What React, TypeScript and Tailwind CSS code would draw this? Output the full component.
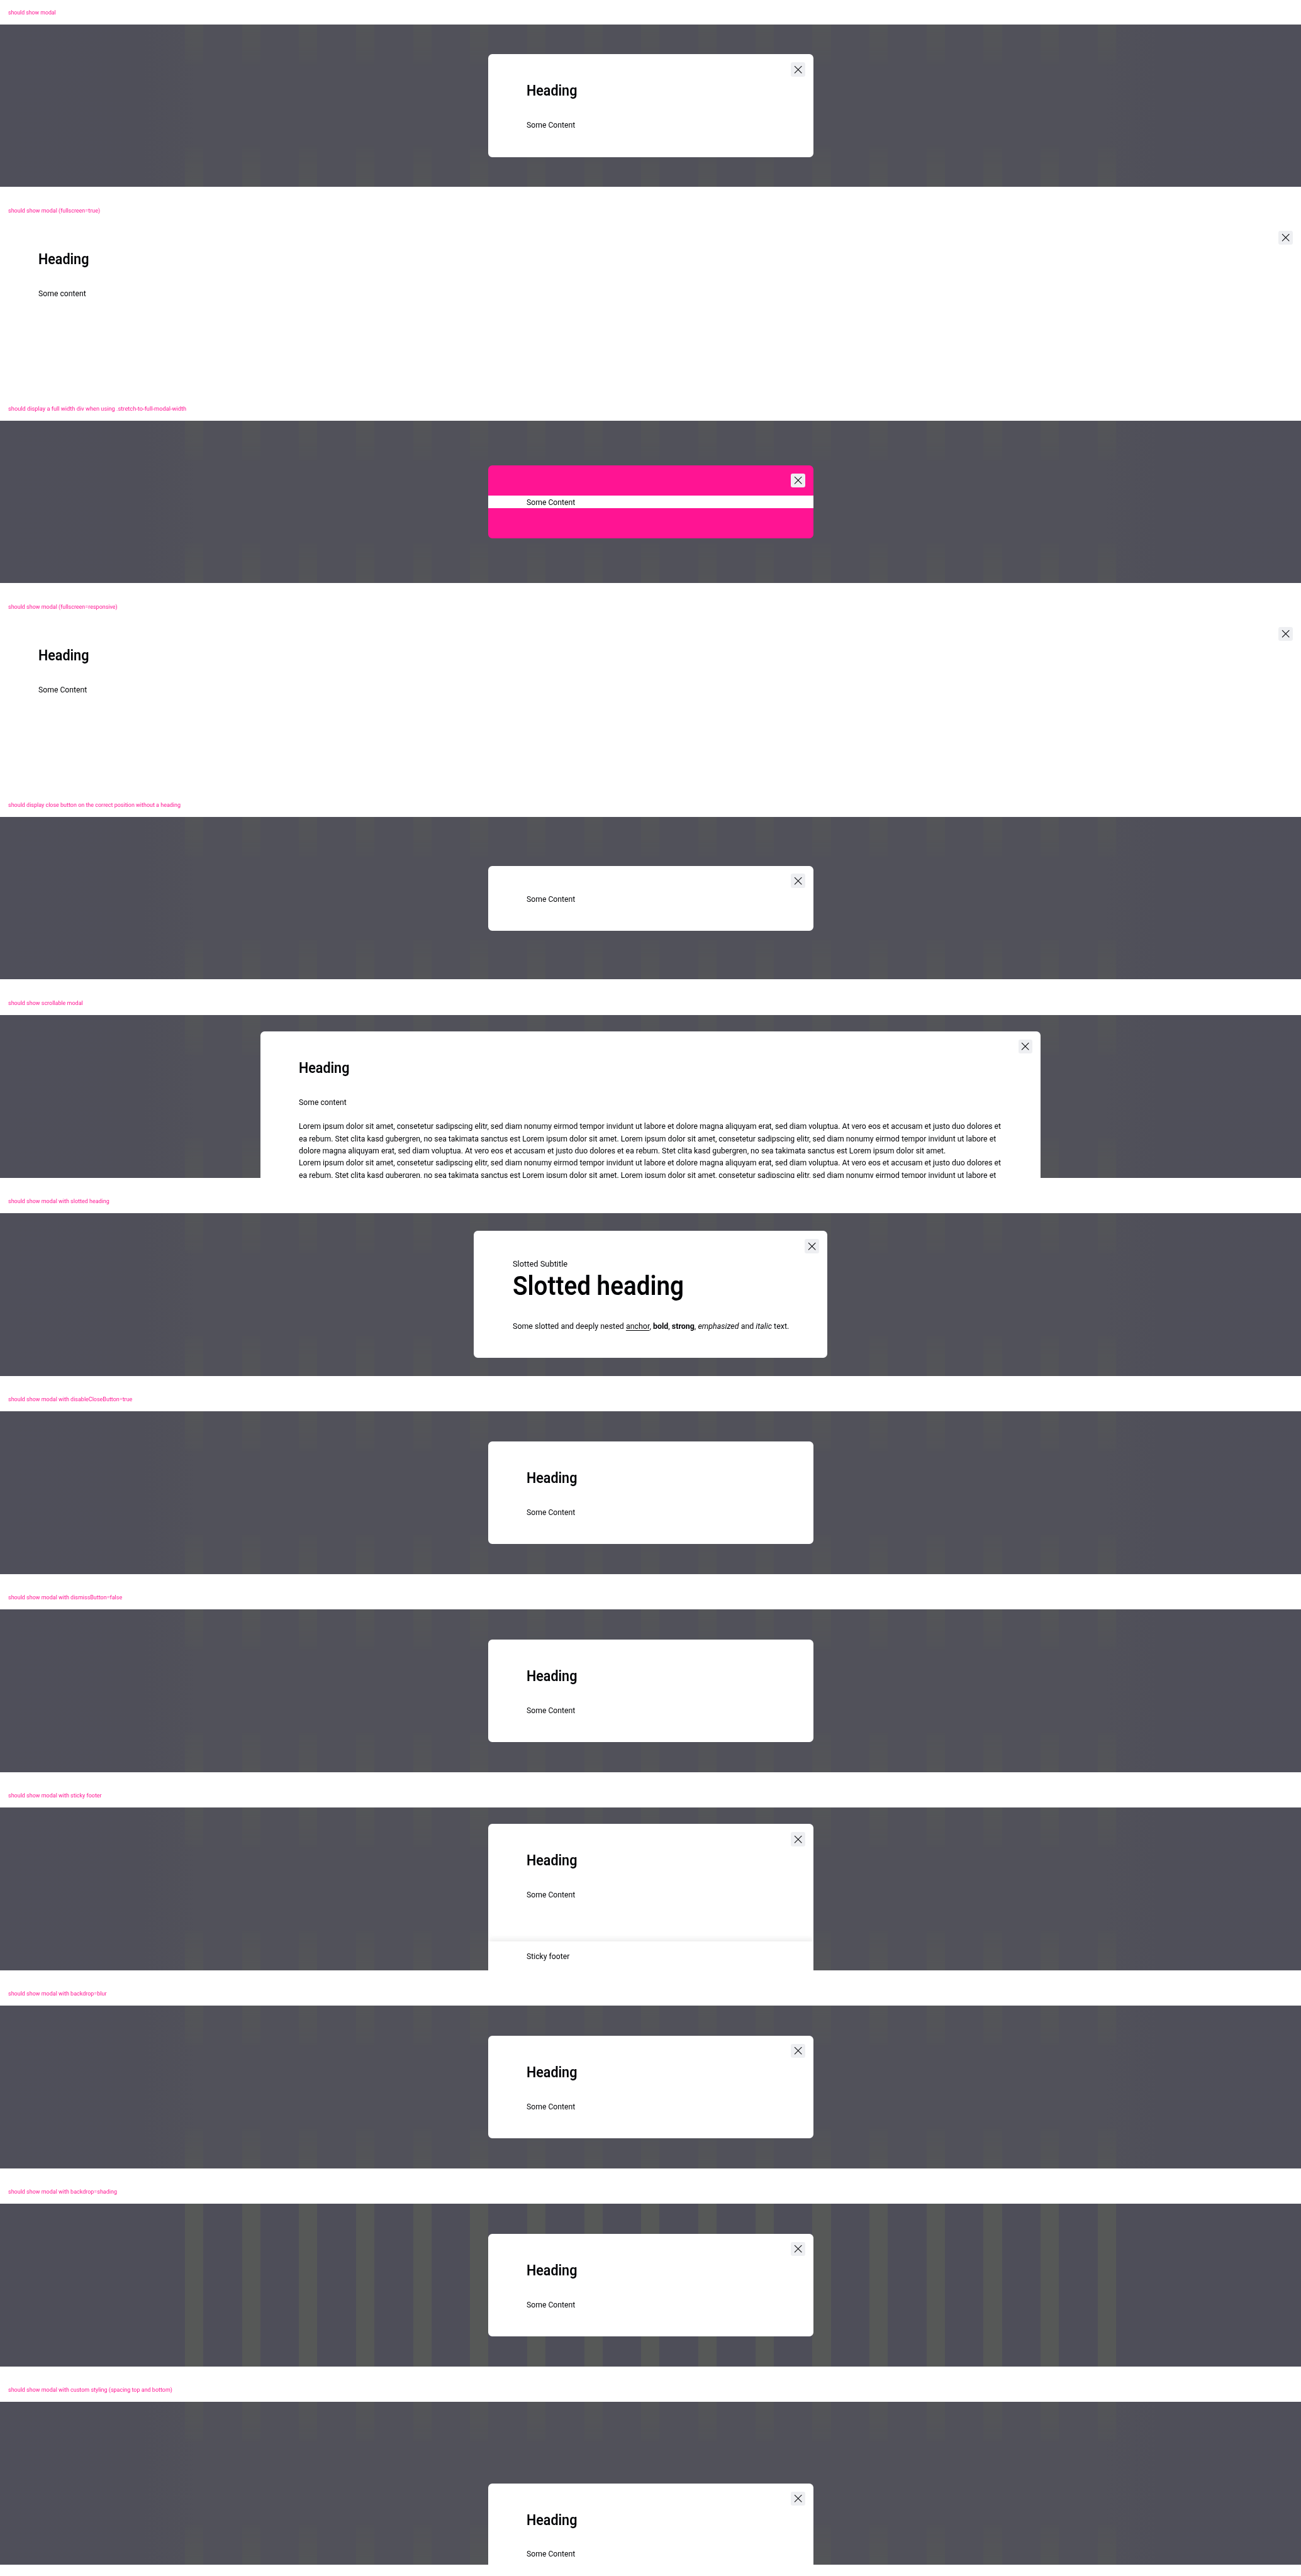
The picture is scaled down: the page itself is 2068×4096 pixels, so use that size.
import React from 'react';

type Backdrop = 'blur' | 'shading' | 'none';

const LOREM_A =
  'Lorem ipsum dolor sit amet, consetetur sadipscing elitr, sed diam nonumy eirmod tempor invidunt ut labore et dolore magna aliquyam erat, sed diam voluptua. At vero eos et accusam et justo duo dolores et';
const LOREM_B =
  'ea rebum. Stet clita kasd gubergren, no sea takimata sanctus est Lorem ipsum dolor sit amet. Lorem ipsum dolor sit amet, consetetur sadipscing elitr, sed diam nonumy eirmod tempor invidunt ut labore et';
const LOREM_C =
  'dolore magna aliquyam erat, sed diam voluptua. At vero eos et accusam et justo duo dolores et ea rebum. Stet clita kasd gubergren, no sea takimata sanctus est Lorem ipsum dolor sit amet.';

/** Single line of slightly condensed body copy. */
function Line({
  className = '',
  fit = 'scale-x-[0.945]',
  children,
}: {
  className?: string;
  fit?: string;
  children: React.ReactNode;
}) {
  return (
    <p className={`h-[24px] whitespace-nowrap text-[16px] leading-[26px] ${className}`}>
      <span className={`inline-block origin-left ${fit}`}>{children}</span>
    </p>
  );
}

function Heading() {
  return (
    <h2 className="h-[38px] whitespace-nowrap text-[29px] font-semibold leading-[41px]">
      <span className="inline-block origin-left scale-x-[0.92]">Heading</span>
    </h2>
  );
}

function Close() {
  return (
    <button className="absolute right-[16px] top-[16px] flex h-[28px] w-[28px] items-center justify-center rounded-[4px] bg-[#eeeff2]">
      <svg width="24" height="24" viewBox="0 0 24 24" fill="none" stroke="#010205" strokeWidth="1.3">
        <path d="M5 5l14 14M19 5L5 19" />
      </svg>
    </button>
  );
}

function Stripes({ backdrop }: { backdrop: Backdrop }) {
  const fade =
    backdrop === 'blur'
      ? 'opacity-60 [mask-image:linear-gradient(to_bottom,#000_0,rgba(0,0,0,.7)_14%,rgba(0,0,0,.4)_23%,transparent_26%,transparent_74%,rgba(0,0,0,.4)_77%,rgba(0,0,0,.7)_86%,#000_100%)]'
      : '';
  return (
    <div className={`absolute inset-0 flex justify-between px-[364px] ${fade}`}>
      {Array.from({ length: 17 }, (_, i) => (
        <div key={i} className="w-[36px] bg-[#565857]" />
      ))}
    </div>
  );
}

function Section({
  label,
  labelFit = 'scale-x-[0.926]',
  backdrop = 'blur',
  children,
}: {
  label: string;
  labelFit?: string;
  backdrop?: Backdrop;
  children: React.ReactNode;
}) {
  const bg =
    backdrop === 'blur'
      ? 'bg-[linear-gradient(to_right,#4f4f5a_0,#4f4f59_11%,#51515a_15%,#51515a_85%,#4f4f59_89%,#4f4f5a_100%)]'
      : backdrop === 'shading'
        ? 'bg-[#4e4e59]'
        : 'bg-white';
  return (
    <section className="h-[390px]">
      <h1 className="flex h-[48px] items-center whitespace-nowrap pl-[16px] pt-[2px] text-[12px] text-[#ff1493]">
        <span className={`origin-left ${labelFit}`}>{label}</span>
      </h1>
      <div className={`relative h-[320px] overflow-hidden ${bg}`}>
        {backdrop !== 'none' && <Stripes backdrop={backdrop} />}
        {children}
      </div>
    </section>
  );
}

function Modal({
  top = 'mt-[59px]',
  size = 'w-[640px] h-[202px]',
  close = true,
  children,
}: {
  top?: string;
  size?: string;
  close?: boolean;
  children: React.ReactNode;
}) {
  return (
    <div className={`relative mx-auto rounded-[8px] bg-white px-[76px] pt-[52px] ${top} ${size}`}>
      {close && <Close />}
      {children}
    </div>
  );
}

function Basic({ text = 'Some Content' }: { text?: string }) {
  return (
    <>
      <Heading />
      <Line className="mt-[36px]">{text}</Line>
    </>
  );
}

function FullScreen({ text }: { text: string }) {
  return (
    <div className="relative h-full bg-white px-[76px] pt-[52px]">
      <Close />
      <Basic text={text} />
    </div>
  );
}

export default function App() {
  return (
    <main className="w-[2560px] overflow-hidden bg-white font-['Roboto',sans-serif] text-[#010205] [zoom:0.8078125]">
      <Section label="should show modal" labelFit="scale-x-[0.9]">
        <Modal>
          <Basic />
        </Modal>
      </Section>
      <Section label="should show modal (fullscreen=true)" backdrop="none">
        <FullScreen text="Some content" />
      </Section>
      <Section
        label="should display a full width div when using .stretch-to-full-modal-width"
        labelFit="scale-x-[0.956]"
      >
        <div className="relative mx-auto mt-[88px] h-[144px] w-[640px] rounded-[8px] bg-[#ff1493] pt-[60px]">
          <Close />
          <div className="bg-white px-[76px]">
            <Line>Some Content</Line>
          </div>
        </div>
      </Section>
      <Section label="should show modal (fullscreen=responsive)" backdrop="none">
        <FullScreen text="Some Content" />
      </Section>
      <Section label="should display close button on the correct position without a heading">
        <Modal top="mt-[96px]" size="w-[640px] h-[128px]">
          <Line>Some Content</Line>
        </Modal>
      </Section>
      <Section label="should show scrollable modal">
        <Modal top="mt-[32px]" size="w-[1536px] h-[400px]">
          <Basic text="Some content" />
          <div className="mt-[24px]">
            <Line fit="scale-x-[0.951]">{LOREM_A}</Line>
            <Line fit="scale-x-[0.951]">{LOREM_B}</Line>
            <Line fit="scale-x-[0.951]">{LOREM_C}</Line>
            <Line fit="scale-x-[0.951]">{LOREM_A}</Line>
            <Line fit="scale-x-[0.951]">{LOREM_B}</Line>
          </div>
        </Modal>
      </Section>
      <Section label="should show modal with slotted heading">
        <Modal top="mt-[35px]" size="w-[695px] h-[250px]">
          <Line fit="scale-x-[0.995]">Slotted Subtitle</Line>
          <h2 className="h-[62px] whitespace-nowrap text-[52px] font-semibold leading-[64px]">
            <span className="inline-block origin-left scale-x-[0.92]">Slotted heading</span>
          </h2>
          <Line className="mt-[36px]" fit="scale-x-[0.963]">
            Some slotted and deeply nested <a className="underline underline-offset-2">anchor</a>, <b>bold</b>,{' '}
            <strong>strong</strong>, <em className="italic">emphasized</em> and <i className="italic">italic</i> text.
          </Line>
        </Modal>
      </Section>
      <Section label="should show modal with disableCloseButton=true">
        <Modal close={false}>
          <Basic />
        </Modal>
      </Section>
      <Section label="should show modal with dismissButton=false">
        <Modal close={false}>
          <Basic />
        </Modal>
      </Section>
      <Section label="should show modal with sticky footer">
        <div className="relative mx-auto mt-[32px] w-[640px] overflow-hidden rounded-t-[8px] bg-white">
          <Close />
          <div className="h-[232px] px-[76px] pt-[52px]">
            <Basic />
          </div>
          <footer className="relative h-[56px] bg-white px-[76px] pt-[16px] shadow-[0_-5px_10px_rgba(204,204,204,0.35)]">
            <Line>Sticky footer</Line>
          </footer>
        </div>
      </Section>
      <Section label="should show modal with backdrop=blur">
        <Modal>
          <Basic />
        </Modal>
      </Section>
      <Section label="should show modal with backdrop=shading" backdrop="shading">
        <Modal>
          <Basic />
        </Modal>
      </Section>
      <Section label="should show modal with custom styling (spacing top and bottom)">
        <Modal top="mt-[160px]" size="w-[640px] h-[202px]">
          <Basic />
        </Modal>
      </Section>
    </main>
  );
}
